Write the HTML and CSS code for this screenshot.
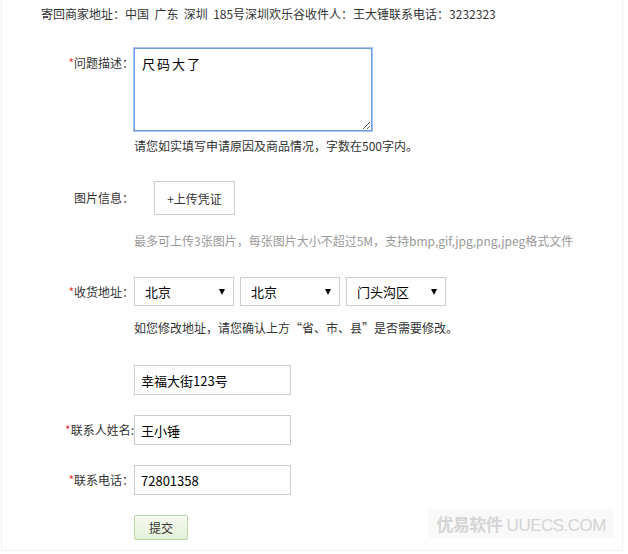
FILE: index.html
```html
<!DOCTYPE html>
<html lang="zh-CN">
<head>
  <meta charset="UTF-8">
  <title>退货申请</title>
  <link rel="stylesheet" href="styles.css">
</head>
<body>

<div class="frame">
  <p class="return-addr">寄回商家地址：中国&nbsp; 广东&nbsp; 深圳&nbsp; 185号深圳欢乐谷收件人：王大锤联系电话：3232323</p>

  <div class="row row-top">
    <label class="label"><span class="req">*</span>问题描述：</label>
    <textarea class="desc">尺码大了</textarea>
  </div>
  <p class="hint hint-desc">请您如实填写申请原因及商品情况，字数在500字内。</p>

  <div class="row row-pic">
    <label class="label">图片信息：</label>
    <button class="upload">+上传凭证</button>
  </div>
  <p class="hint hint-gray">最多可上传3张图片，每张图片大小不超过5M，支持bmp,gif,jpg,png,jpeg格式文件</p>

  <div class="row row-addr">
    <label class="label"><span class="req">*</span>收货地址：</label>
    <div class="selects">
      <span class="select">北京</span>
      <span class="select">北京</span>
      <span class="select">门头沟区</span>
    </div>
  </div>
  <p class="hint hint-addr">如您修改地址，请您确认上方“省、市、县”是否需要修改。</p>

  <div class="row row-street">
    <label class="label"></label>
    <input class="text" type="text" value="幸福大街123号">
  </div>

  <div class="row row-field">
    <label class="label"><span class="req">*</span>联系人姓名:</label>
    <input class="text" type="text" value="王小锤">
  </div>

  <div class="row row-field">
    <label class="label"><span class="req">*</span>联系电话：</label>
    <input class="text" type="text" value="72801358">
  </div>

  <div class="row row-submit">
    <label class="label"></label>
    <button class="submit">提交</button>
  </div>

  <div class="watermark"><b>优易软件</b> UUECS.COM</div>
</div>

</body>
</html>
```

FILE: styles.css
```css
body {
  margin: 0;
  background: #fff;
  font-family: "Noto Sans CJK SC", "Liberation Sans", sans-serif;
  font-size: 12px;
  color: #333;
}

.frame {
  position: relative;
  margin-left: 1px;
  width: 620px;
  height: 550px;
  border: 1px solid #f2f2f2;
  border-top: none;
}

p {
  margin: 0;
}

.return-addr {
  padding-left: 39px;
  line-height: 28px;
  height: 28px;
}

.row {
  display: flex;
  align-items: center;
}

.label {
  width: 132px;
  flex: none;
  text-align: right;
  line-height: 16px;
  white-space: nowrap;
}

.req {
  color: #e4393c;
}

.row-top {
  align-items: flex-start;
  margin-top: 20px;
}

.row-top .label {
  padding-top: 7px;
}

.desc {
  width: 238px;
  height: 83px;
  box-sizing: border-box;
  margin: 0;
  padding: 5px 7px;
  border: 1px solid #6f9be0;
  box-shadow: 0 0 0 1px #a8c5f2;
  font-family: inherit;
  font-size: 13px;
  letter-spacing: 2px;
  color: #000;
  outline: none;
}

.hint {
  padding-left: 132px;
  line-height: 18px;
}

.hint-desc {
  margin-top: 6px;
}

.row-pic {
  margin-top: 26px;
}

.upload {
  margin-left: 20px;
  width: 81px;
  height: 34px;
  border: 1px solid #ccc;
  background: #fff;
  font-family: inherit;
  font-size: 12px;
  color: #333;
  padding: 0;
}

.hint-gray {
  margin-top: 17px;
  color: #999;
}

.row-addr {
  margin-top: 27px;
}

.selects {
  display: flex;
  gap: 6px;
}

.select {
  position: relative;
  width: 100px;
  height: 29px;
  box-sizing: border-box;
  border: 1px solid #ccc;
  padding-left: 10px;
  line-height: 27px;
  font-size: 13px;
  color: #000;
}

.select::after {
  content: "";
  position: absolute;
  right: 8px;
  top: 11px;
  border-left: 3px solid transparent;
  border-right: 3px solid transparent;
  border-top: 6px solid #000;
}

.hint-addr {
  margin-top: 13px;
}

.row-street {
  margin-top: 28px;
}

.row-field {
  margin-top: 20px;
}

.text {
  width: 157px;
  height: 30px;
  box-sizing: border-box;
  margin: 0;
  border: 1px solid #ccc;
  padding: 0 6px;
  font-family: inherit;
  font-size: 13px;
  color: #000;
  outline: none;
}

.row-submit {
  margin-top: 20px;
}

.submit {
  width: 54px;
  height: 25px;
  padding: 0;
  border: 1px solid #b9d7a4;
  border-radius: 2px;
  background: linear-gradient(#f6fbf1, #e3f0d8);
  font-family: inherit;
  font-size: 12px;
  color: #333;
}

.watermark {
  position: absolute;
  right: 8px;
  bottom: 12px;
  padding: 2px 8px;
  border-radius: 4px;
  background: #f9f9f9;
  color: #d4d4d4;
  font-family: "Liberation Sans", "Noto Sans CJK SC", sans-serif;
  font-size: 17px;
  letter-spacing: -0.5px;
}

.watermark b {
  font-family: "Noto Sans CJK SC", sans-serif;
}
```
